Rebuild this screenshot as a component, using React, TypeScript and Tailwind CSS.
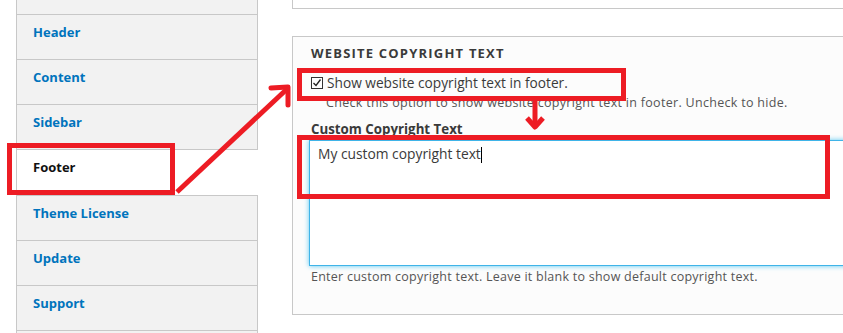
import React from "react";

const tabs = ["Header", "Content", "Sidebar", "Footer", "Theme License", "Update", "Support"];

export default function App() {
  return (
    <div className="relative w-[843px] h-[333px] overflow-hidden bg-white" style={{ fontFamily: '"Open Sans", "DejaVu Sans", sans-serif' }}>
      <div className="flex h-full">
        {/* Sidebar */}
        <div className="ml-[16px] w-[242px] shrink-0 flex flex-col">
          <div className="h-[15px] shrink-0 bg-[#f2f2f2] border-l border-r border-b border-[#c8c8c8]" />
          {tabs.map((t) =>
            t === "Footer" ? (
              <div key={t} className="h-[46px] shrink-0 bg-white border-l border-b border-[#c8c8c8] pl-[16px] pt-[8px] text-[13px] font-bold text-[#111] leading-[18px]">
                {t}
              </div>
            ) : (
              <div key={t} className="h-[45px] shrink-0 bg-[#f2f2f2] border-l border-r border-b border-[#c8c8c8] pl-[16px] pt-[8px] text-[13px] font-bold text-[#0074bd] leading-[18px]">
                {t}
              </div>
            )
          )}
          <div className="h-[20px] shrink-0 bg-[#f2f2f2] border-l border-r border-[#c8c8c8]" />
        </div>

        {/* Content */}
        <div className="ml-[34px] w-[620px] shrink-0 flex flex-col">
          <div className="h-[9px] shrink-0 border-l border-b border-[#c8c8c8]" />
          <div className="mt-[27px] h-[279px] shrink-0 border border-[#c8c8c8] bg-[#fcfcfc] pl-[18px] pt-[7px]">
            <div className="text-[13px] font-bold text-[#3a3a3a] tracking-[1.2px] leading-[18px]">WEBSITE COPYRIGHT TEXT</div>
            <div className="mt-[12px] flex items-center h-[18px]">
              <svg width="12" height="12" viewBox="0 0 12 12" className="shrink-0">
                <rect x="0.5" y="0.5" width="11" height="11" fill="white" stroke="#333" strokeWidth="1" />
                <path d="M2.5 6 L5 8.5 L9.5 2.5" fill="none" stroke="#222" strokeWidth="1.3" />
              </svg>
              <span className="ml-[4px] text-[13.7px] text-[#3a3a3a] leading-[18px]">Show website copyright text in footer.</span>
            </div>
            <div className="ml-[15px] mt-[2px] text-[12.5px] tracking-[0.3px] text-[#555] leading-[18px]">
              Check this option to show website copyright text in footer. Uncheck to hide.
            </div>
            <div className="mt-[8px] text-[13.3px] font-bold text-[#3a3a3a] leading-[18px]">Custom Copyright Text</div>
            <div className="mt-[2px] -ml-[2px] w-[580px] h-[126px] bg-white border border-[#3fb4e8] shadow-[0_0_5px_#57c6f2] px-[8px] pt-[4px] text-[13.8px] text-[#3a3a3a] leading-[18px]">
              My custom copyright text<span className="inline-block w-px h-[16px] bg-black align-middle" />
            </div>
            <div className="mt-[2px] text-[12.5px] tracking-[0.25px] text-[#555] leading-[18px]">
              Enter custom copyright text. Leave it blank to show default copyright text.
            </div>
          </div>
        </div>
      </div>

      {/* Red annotations overlay */}
      <svg className="absolute inset-0 pointer-events-none" width="843" height="333" viewBox="0 0 843 333">
        <g fill="none" stroke="#ed1c24" strokeWidth="5">
          <rect x="9.5" y="145.5" width="163" height="47" />
          <rect x="299.5" y="70.5" width="324" height="28" />
          <rect x="299.5" y="137.5" width="528" height="59" />
          <line x1="177" y1="192" x2="287" y2="89" />
          <polyline points="271,88 288,87 288,105" strokeLinecap="round" strokeLinejoin="round" />
          <line x1="535" y1="100" x2="535" y2="126" />
          <polyline points="527,118 535,127 543,118" strokeLinejoin="round" />
        </g>
      </svg>
    </div>
  );
}
